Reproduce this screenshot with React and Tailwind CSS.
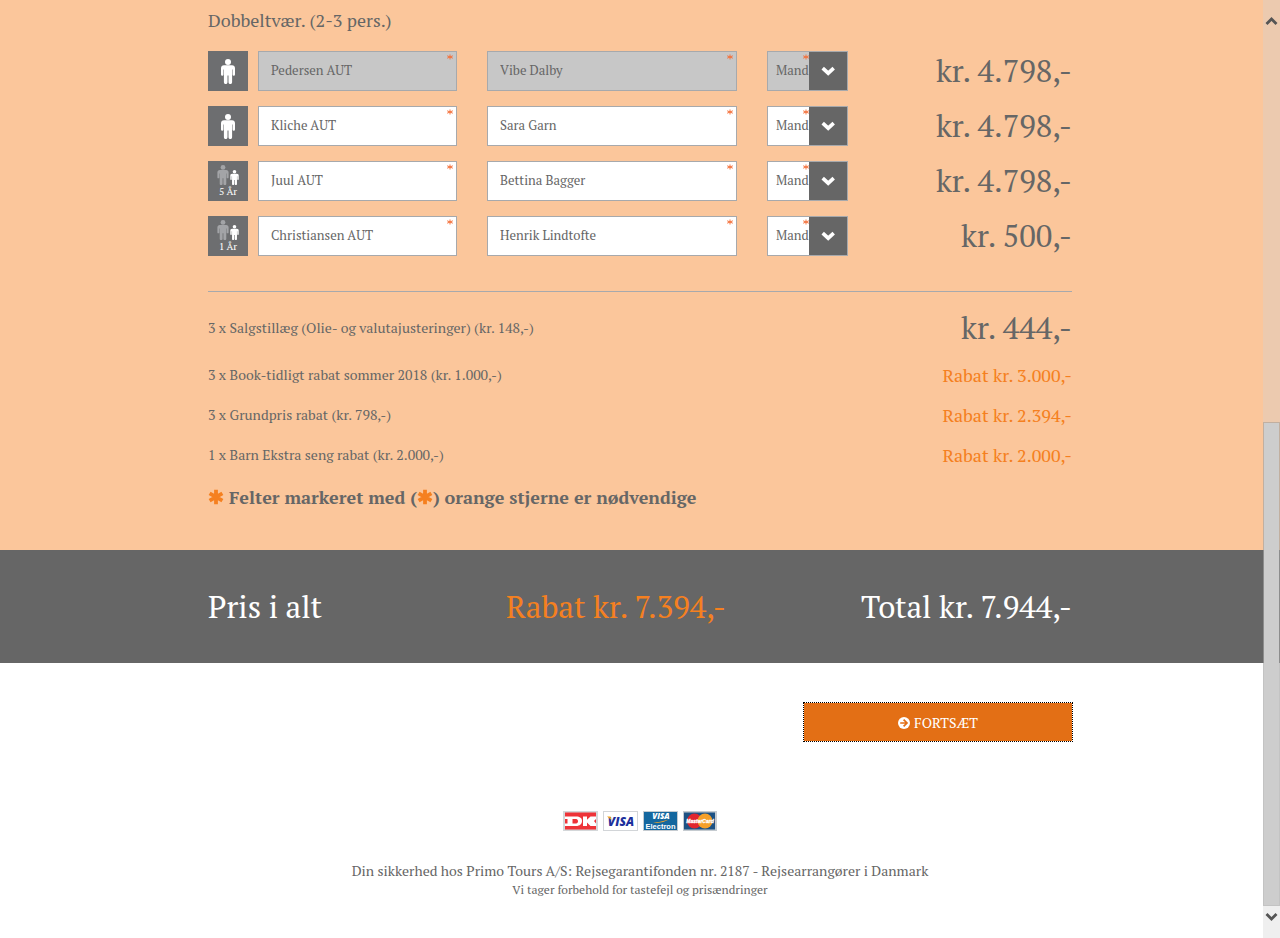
const travellers = [
  { last: 'Pedersen AUT', first: 'Vibe Dalby', price: 'kr. 4.798,-', locked: true },
  { last: 'Kliche AUT', first: 'Sara Garn', price: 'kr. 4.798,-' },
  { last: 'Juul AUT', first: 'Bettina Bagger', price: 'kr. 4.798,-', age: '5 År' },
  { last: 'Christiansen AUT', first: 'Henrik Lindtofte', price: 'kr. 500,-', age: '1 År' },
];

const discounts = [
  { label: '3 x Book-tidligt rabat sommer 2018 (kr. 1.000,-)', value: 'Rabat kr. 3.000,-' },
  { label: '3 x Grundpris rabat (kr. 798,-)', value: 'Rabat kr. 2.394,-' },
  { label: '1 x Barn Ekstra seng rabat (kr. 2.000,-)', value: 'Rabat kr. 2.000,-' },
];

const field =
  'block h-10 w-full border border-[#a7a9ac] bg-white text-[13px] text-[#666] outline-none disabled:bg-[#c7c7c7] disabled:opacity-100';

function Person({ className }) {
  return (
    <svg viewBox="0 0 14 25" className={className} fill="currentColor" aria-hidden="true">
      <circle cx="7" cy="3" r="3" />
      <path d="M3 6.200h8c1.800 0 3 1.200 3 3v6.300a1.200 1.200 0 0 1-2.400 0V10.500h-.5v12.800a1.600 1.600 0 0 1-3.600 0V16.500h-1v6.800a1.600 1.600 0 0 1-3.600 0V10.500h-.5v5a1.200 1.200 0 0 1-2.400 0V9.200c0-1.800 1.200-3 3-3z" />
    </svg>
  );
}

function Asterisk({ className }) {
  return (
    <svg viewBox="0 0 16 16" className={className} aria-hidden="true">
      <path d="M8 .8v14.400M1.600 4.300l12.800 7.400M14.400 4.300 1.600 11.700" fill="none" stroke="currentColor" strokeWidth="3.800" />
    </svg>
  );
}

function SmallStar({ className }) {
  return (
    <svg viewBox="0 0 6 6" className={className} aria-hidden="true">
      <path d="M3 .5v5M.2 1.800l5.600 2.400M5.800 1.800.2 4.200" fill="none" stroke="currentColor" strokeWidth="1" />
    </svg>
  );
}

function TravellerIcon({ age }) {
  if (!age) {
    return (
      <div className="flex size-10 items-center justify-center bg-[#6d6e70] text-white">
        <Person className="h-[25px] w-[14px]" />
      </div>
    );
  }
  return (
    <div className="flex size-10 flex-col items-center bg-[#6d6e70] pt-1 text-white">
      <div className="flex items-end gap-px">
        <Person className="h-5 w-3 text-[#a3a4a7]" />
        <Person className="h-[15px] w-[9px]" />
      </div>
      <span className="text-[10px] leading-[14px]">{age}</span>
    </div>
  );
}

function TravellerRow({ traveller }) {
  const { last, first, price, age, locked } = traveller;
  return (
    <div className="flex items-center">
      <TravellerIcon age={age} />
      <div className="relative ml-2.5 w-[199px]">
        <input className={`${field} px-3 pb-0.5`} aria-label="Efternavn" defaultValue={last} disabled={locked} />
        <SmallStar className="absolute top-[3px] right-1 size-1.5 text-[#f4703a]" />
      </div>
      <div className="relative ml-[30px] w-[250px]">
        <input className={`${field} px-3 pb-0.5`} aria-label="Fornavn" defaultValue={first} disabled={locked} />
        <SmallStar className="absolute top-[3px] right-1 size-1.5 text-[#f4703a]" />
      </div>
      <div className="relative ml-[30px] w-[81px]">
        <select className={`${field} appearance-none pl-2`} aria-label="Køn" disabled={locked}>
          <option>Mand</option>
          <option>Kvinde</option>
        </select>
        <SmallStar className="absolute top-[3px] left-9 size-1.5 text-[#f4703a]" />
        <span className="pointer-events-none absolute inset-y-px right-px flex w-[38px] items-center justify-center bg-[#666] text-white">
          <svg viewBox="0 0 14 10" className="h-2.5 w-3.5" aria-hidden="true">
            <path d="M1.700 2.200 7.200 7.200l5.500-5" fill="none" stroke="currentColor" strokeWidth="3.600" />
          </svg>
        </span>
      </div>
      <span className="ml-auto text-[31px] leading-[38px]">{price}</span>
    </div>
  );
}

function PaymentCards() {
  return (
    <div className="flex items-center justify-center gap-[5px]">
      <svg width="35" height="20" viewBox="0 0 35 20" role="img" aria-label="Dankort">
        <rect width="35" height="20" fill="#d4d7d9" />
        <rect x="2" y="1.500" width="31" height="17" fill="#ee3338" />
        <path d="M2 5.500h11c4 0 6 1.700 6 4.500s-2 5-6 5H2v-2.500h2.500V8H2zM20 5.500h4v3.200L27.500 5.500H33V8l-2 2 2 2.500V15h-5.500L24 11.500V15h-4z" fill="#fff" />
        <path d="M9.500 8H12c2 0 3 .6 3 2.200s-1 2.300-3 2.300H9.500z" fill="#ee3338" />
      </svg>
      <svg width="35" height="20" viewBox="0 0 35 20" role="img" aria-label="Visa">
        <rect x=".5" y=".5" width="34" height="19" fill="#fff" stroke="#d2d5d8" />
        <text x="18" y="14.500" textAnchor="middle" fontFamily="Open Sans, sans-serif" fontSize="12" fontWeight="800" fontStyle="italic" fill="#1c2f9c">VISA</text>
        <path d="M4 5.500h3.500l1 3.500z" fill="#efa51f" />
      </svg>
      <svg width="35" height="20" viewBox="0 0 35 20" role="img" aria-label="Visa Electron">
        <rect width="35" height="20" fill="#c5cbd0" />
        <rect x="1" y="1" width="33" height="18" fill="#14679f" />
        <text x="18" y="8" textAnchor="middle" fontFamily="Open Sans, sans-serif" fontSize="8" fontWeight="800" fontStyle="italic" fill="#fff">VISA</text>
        <path d="M10 11.500q8-.5 16-3-5 3-12 3.500z" fill="#efa32c" />
        <text x="17.500" y="18.300" textAnchor="middle" fontFamily="Liberation Sans, sans-serif" fontSize="7.500" fontWeight="700" fill="#fff">Electron</text>
      </svg>
      <svg width="34" height="20" viewBox="0 0 34 20" role="img" aria-label="MasterCard">
        <rect width="34" height="20" fill="#c5cbd0" />
        <rect x="1" y="1.500" width="31" height="17" fill="#1d5284" />
        <circle cx="11.500" cy="10" r="7.500" fill="#e0262e" />
        <circle cx="22" cy="10" r="7.500" fill="#f5a02a" />
        <text x="17" y="12" textAnchor="middle" fontFamily="Liberation Sans, sans-serif" fontSize="5" fontWeight="700" fontStyle="italic" fill="#fff" stroke="#fff" strokeWidth=".3">MasterCard</text>
      </svg>
    </div>
  );
}

function Scrollbar() {
  return (
    <div className="absolute inset-y-0 right-0 flex w-[17px] flex-col bg-[#d3d3d3]/36" aria-hidden="true">
      <svg viewBox="0 0 17 33" className="h-[33px] w-[17px]">
        <path d="M3.500 24 8.500 19l5 5" fill="none" stroke="#555" strokeWidth="2.800" />
      </svg>
      <div className="basis-[389px]" />
      <div className="grow border border-[#8f8f8f]/45 bg-[#cdcdcd] bg-clip-padding" />
      <svg viewBox="0 0 17 33" className="h-[33px] w-[17px]">
        <path d="M3.500 8 8.500 13l5-5" fill="none" stroke="#555" strokeWidth="2.800" />
      </svg>
    </div>
  );
}

const container = 'mx-auto w-full max-w-[864px]';

export default function App() {
  return (
    <div className="relative min-h-screen bg-white font-['PT_Serif','Liberation_Serif',serif] text-[#666]">
      <section className="bg-[#fbc69b]">
        <div className={`${container} pb-[30px]`}>
          <h2 className="mb-2.5 text-lg leading-[41px]">Dobbeltvær. (2-3 pers.)</h2>
          <div className="flex flex-col gap-[15px]">
            {travellers.map((t) => (
              <TravellerRow key={t.last} traveller={t} />
            ))}
          </div>
          <div className="mt-[35px] border-t border-[#a7a9ac] pt-2 text-sm">
            <div className="flex h-[55px] items-center justify-between">
              <span>3 x Salgstillæg (Olie- og valutajusteringer) (kr. 148,-)</span>
              <span className="text-[31px] leading-10">kr. 444,-</span>
            </div>
            {discounts.map((d) => (
              <div key={d.label} className="flex h-10 items-center justify-between">
                <span>{d.label}</span>
                <span className="text-lg leading-[26px] text-[#f58020]">{d.value}</span>
              </div>
            ))}
          </div>
          <p className="flex h-11 items-center text-lg font-bold">
            <Asterisk className="mr-[5px] size-4 text-[#f58020]" />
            Felter markeret med (<Asterisk className="size-4 text-[#f58020]" />) orange stjerne er nødvendige
          </p>
          <div className="h-px" />
        </div>
      </section>

      <section className="bg-[#666] text-white">
        <div className={`${container} flex h-[113px] items-center pt-0.5 text-[31px]`}>
          <span className="w-[298px]">Pris i alt</span>
          <span className="text-[#f58020]">Rabat kr. 7.394,-</span>
          <span className="ml-auto">Total kr. 7.944,-</span>
        </div>
      </section>

      <div className={`${container} flex justify-end pt-10`}>
        <button
          type="button"
          className="flex h-[38px] w-[268px] items-center justify-center gap-1 bg-[#e36f15] pt-0.5 text-sm text-white outline-1 outline-dotted outline-black"
        >
          <svg viewBox="0 0 12 12" className="size-3" aria-hidden="true">
            <circle cx="6" cy="6" r="6" fill="currentColor" />
            <path d="M2.200 6h6M5.600 2.600 9 6 5.600 9.400" fill="none" stroke="#e36f15" strokeWidth="1.700" />
          </svg>
          FORTSÆT
        </button>
      </div>

      <footer className="pt-[70px] pb-10 text-center">
        <PaymentCards />
        <p className="mt-[30px] text-sm leading-5">
          Din sikkerhed hos Primo Tours A/S: Rejsegarantifonden nr. 2187 - Rejsearrangører i Danmark
        </p>
        <p className="text-xs leading-[18px]">Vi tager forbehold for tastefejl og prisændringer</p>
      </footer>

      <Scrollbar />
    </div>
  );
}
